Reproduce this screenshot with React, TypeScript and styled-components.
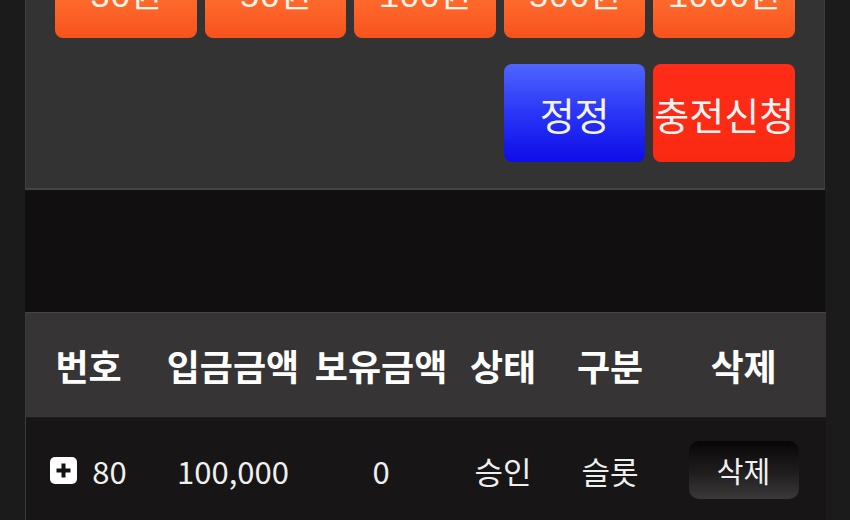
import React from "react";
import styled, { createGlobalStyle } from "styled-components";

const GlobalStyle = createGlobalStyle`
  html, body {
    margin: 0;
    padding: 0;
    background: #1b1b1b;
    overflow: hidden;
  }
  body {
    font-family: "Noto Sans CJK KR", "Noto Sans", sans-serif;
    color: #f2f2f2;
  }
`;

const Page = styled.div`
  width: 800px;
  margin: -86px auto 0;
`;

const ChargePanel = styled.section`
  background: #333333;
  border-left: 1px solid #3e3e3e;
  border-right: 1px solid #3e3e3e;
  border-bottom: 2px solid #454545;
  padding: 26px 29px;
  display: flex;
  flex-direction: column;
  gap: 26px;
`;

const ButtonRow = styled.div`
  display: grid;
  grid-template-columns: repeat(5, 1fr);
  gap: 8px;
  height: 98px;
`;

const AmountButton = styled.button`
  border: none;
  border-radius: 8px;
  background: linear-gradient(180deg, #ff7436 0%, #ff6a2c 60%, #f8521e 100%);
  color: #fff4ee;
  font-family: "Liberation Mono", "Noto Sans CJK KR", monospace;
  font-size: 34px;
  padding: 6px 0 0;
  white-space: nowrap;
`;

const ActionButton = styled.button<{ tone: "blue" | "red"; col: number }>`
  grid-column: ${p => p.col};
  border: none;
  border-radius: 8px;
  padding: 0;
  white-space: nowrap;
  font-family: "Noto Sans CJK KR", sans-serif;
  font-size: 38px;
  color: #f4f4f4;
  background: ${p =>
    p.tone === "blue"
      ? "linear-gradient(180deg, #4f66ff 0%, #2a35f6 50%, #0d0de8 100%)"
      : "linear-gradient(180deg, #ff2c18 0%, #fa2a12 100%)"};
`;

const Spacer = styled.div`
  height: 122px;
  background: #110f10;
`;

const Table = styled.div`
  display: grid;
  grid-template-columns: 125px 164px 132px 112px 102px 165px;
  border-left: 1px solid #3a3a3a;
  border-right: 1px solid #3a3a3a;
`;

const HeadCell = styled.div`
  height: 104px;
  background: #363435;
  border-top: 1px solid #474546;
  border-bottom: 1px solid #1e1c1d;
  display: flex;
  align-items: center;
  justify-content: center;
  font-size: 36px;
  font-weight: 700;
  color: #ffffff;
  white-space: nowrap;
`;

const Cell = styled.div`
  height: 104px;
  background: #171516;
  display: flex;
  align-items: center;
  justify-content: center;
  gap: 15px;
  font-size: 31px;
  font-weight: 400;
  color: #efefef;
  white-space: nowrap;
`;

const DeleteButton = styled.button`
  width: 110px;
  height: 58px;
  border: none;
  border-radius: 10px;
  background: linear-gradient(180deg, #080607 0%, #1d1b1c 50%, #3a3839 100%);
  color: #f0f0f0;
  font-family: "Noto Sans CJK KR", sans-serif;
  font-size: 29px;
  padding: 0;
`;

const PlusBox = () => (
  <svg width="27" height="27" viewBox="0 0 27 27">
    <rect x="0" y="0" width="27" height="27" rx="5" fill="#ffffff" />
    <path d="M13.5 6.5v14M6.5 13.5h14" stroke="#111" strokeWidth="4" />
  </svg>
);

const amounts = ["30원", "50원", "100원", "500원", "1000원"];
const headers = ["번호", "입금금액", "보유금액", "상태", "구분", "삭제"];

export default function App() {
  return (
    <>
      <GlobalStyle />
      <Page>
        <ChargePanel>
          <ButtonRow>
            {amounts.map(a => (
              <AmountButton key={a}>{a}</AmountButton>
            ))}
          </ButtonRow>
          <ButtonRow>
            <ActionButton tone="blue" col={4}>정정</ActionButton>
            <ActionButton tone="red" col={5}>충전신청</ActionButton>
          </ButtonRow>
        </ChargePanel>
        <Spacer />
        <Table>
          {headers.map(h => (
            <HeadCell key={h}>{h}</HeadCell>
          ))}
          <Cell>
            <PlusBox />
            <span>80</span>
          </Cell>
          <Cell>100,000</Cell>
          <Cell>0</Cell>
          <Cell>승인</Cell>
          <Cell>슬롯</Cell>
          <Cell>
            <DeleteButton>삭제</DeleteButton>
          </Cell>
        </Table>
      </Page>
    </>
  );
}
